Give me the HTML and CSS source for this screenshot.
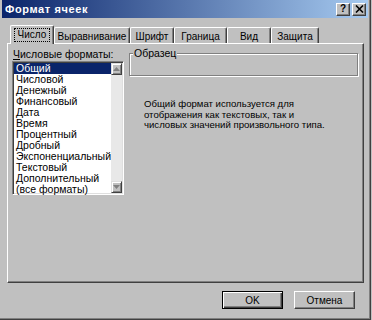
FILE: index.html
```html
<!DOCTYPE html>
<html lang="ru">
<head>
  <meta charset="UTF-8" />
  <title>Формат ячеек</title>
  <link rel="stylesheet" href="styles.css">
</head>
<body>
  <div class="window">
    <div class="titlebar">
      <div class="title">Формат ячеек</div>
      <div class="title-btns">
        <span class="tbtn">?</span>
        <span class="tbtn">
          <svg width="9" height="8" viewBox="0 0 9 8"><path d="M1 0.5 L8 7.5 M8 0.5 L1 7.5" stroke="#000" stroke-width="1.6"/></svg>
        </span>
      </div>
    </div>

    <div class="tabs">
      <div class="tab active"><span class="focus">Число</span></div>
      <div class="tab t-align">Выравнивание</div>
      <div class="tab t-font">Шрифт</div>
      <div class="tab t-border">Граница</div>
      <div class="tab t-view">Вид</div>
      <div class="tab t-prot">Защита</div>
    </div>

    <div class="panel">
      <div class="left-col">
        <div class="list-label"><u>Ч</u>исловые форматы:</div>
        <div class="listbox">
          <ul class="items">
            <li class="selected">Общий</li>
            <li>Числовой</li>
            <li>Денежный</li>
            <li>Финансовый</li>
            <li>Дата</li>
            <li>Время</li>
            <li>Процентный</li>
            <li>Дробный</li>
            <li>Экспоненциальный</li>
            <li>Текстовый</li>
            <li>Дополнительный</li>
            <li>(все форматы)</li>
          </ul>
          <div class="scrollbar">
            <div class="sbtn"><svg width="7" height="4" viewBox="0 0 7 4"><path d="M0 4 L3.5 0 L7 4 Z" fill="#808080"/></svg></div>
            <div class="track"></div>
            <div class="sbtn"><svg width="7" height="4" viewBox="0 0 7 4"><path d="M0 0 L3.5 4 L7 0 Z" fill="#808080"/></svg></div>
          </div>
        </div>
      </div>
      <div class="right-col">
        <div class="group">
          <span class="group-label">Образец</span>
        </div>
        <p class="desc">Общий формат используется для<br>отображения как текстовых, так и<br>числовых значений произвольного типа.</p>
      </div>
    </div>

    <div class="buttons">
      <button class="btn default">OK</button>
      <button class="btn">Отмена</button>
    </div>
  </div>
</body>
</html>
```

FILE: styles.css
```css
* { margin: 0; padding: 0; box-sizing: border-box; }
body {
  background-color: #c0c0c0;
  font-family: "Liberation Sans", Arial, sans-serif;
  font-size: 10px;
  color: #000;
  width: 372px;
  height: 320px;
  overflow: hidden;
}

.window {
  width: 371px;
  height: 320px;
  padding: 0 2px 0 2px;
  border-right: 1px solid #404040;
  border-bottom: 1px solid #404040;
  box-shadow: inset -1px -1px 0 #808080;
}

.titlebar {
  height: 18px;
  background: linear-gradient(to right, #0a246a, #a6caf0);
  display: flex;
  justify-content: space-between;
  align-items: center;
  padding: 0 2px 0 3px;
}
.title {
  color: #fff;
  font-weight: bold;
  font-size: 11px;
  letter-spacing: 0.6px;
}
.title-btns { display: flex; gap: 2px; }
.tbtn {
  width: 14px;
  height: 13px;
  background: #c0c0c0;
  border-top: 1px solid #fff;
  border-left: 1px solid #fff;
  border-right: 1px solid #404040;
  border-bottom: 1px solid #404040;
  box-shadow: inset -1px -1px 0 #808080;
  display: flex;
  align-items: center;
  justify-content: center;
  font-weight: bold;
  font-size: 10px;
  line-height: 1;
}

.tabs {
  display: flex;
  align-items: flex-end;
  margin-top: 6px;
  padding-left: 8px;
  height: 19px;
  position: relative;
  z-index: 1;
}
.tab {
  height: 16px;
  border-top: 1px solid #fff;
  border-left: 1px solid #fff;
  border-right: 1px solid #404040;
  box-shadow: inset -1px 0 0 #808080;
  border-radius: 2px 2px 0 0;
  display: flex;
  align-items: center;
  justify-content: center;
  padding-top: 1px;
}
.tab.active {
  width: 44px;
  height: 19px;
  margin-bottom: -1px;
  background: #c0c0c0;
  padding-bottom: 2px;
}
.focus { border: 1px dotted #000; padding: 0 3px; line-height: 12px; }
.t-align { width: 76px; }
.t-font { width: 44px; }
.t-border { width: 53px; }
.t-view { width: 44px; }
.t-prot { width: 48px; }

.panel {
  width: 357px;
  height: 240px;
  margin-left: 5px;
  border-top: 1px solid #fff;
  border-left: 1px solid #fff;
  border-right: 1px solid #404040;
  border-bottom: 1px solid #404040;
  box-shadow: inset -1px -1px 0 #808080;
  display: flex;
  padding: 4px 0 0 4px;
}

.left-col { width: 112px; }
.list-label { height: 13px; line-height: 12px; padding-left: 1px; font-size: 10.5px; }
.list-label u { text-decoration: underline; }
.listbox {
  margin-top: 0;
  height: 134px;
  display: flex;
  background: #fff;
  border-top: 1px solid #808080;
  border-left: 1px solid #808080;
  border-right: 1px solid #fff;
  border-bottom: 1px solid #fff;
  box-shadow: inset 1px 1px 0 #404040, inset -1px -1px 0 #dfdfdf;
  padding: 1px;
}
.items { list-style: none; flex: 1; font-size: 10.5px; }
.items li { height: 11px; line-height: 11px; padding-left: 2px; white-space: nowrap; }
.items li.selected { background: #0a246a; color: #fff; }

.scrollbar { width: 15px; display: flex; flex-direction: column; }
.sbtn {
  height: 12px;
  background: #c0c0c0;
  border-top: 1px solid #dfdfdf;
  border-left: 1px solid #dfdfdf;
  border-right: 1px solid #404040;
  border-bottom: 1px solid #404040;
  box-shadow: inset 1px 1px 0 #fff, inset -1px -1px 0 #808080;
  display: flex;
  align-items: center;
  justify-content: center;
}
.track { flex: 1; background: #e8e8e8; }

.right-col { flex: 1; padding-left: 5px; padding-right: 5px; }
.group {
  margin-top: 5px;
  height: 23px;
  border: 1px solid #808080;
  box-shadow: 1px 1px 0 #fff, inset 1px 1px 0 #fff;
  position: relative;
}
.group-label {
  position: absolute;
  top: -7px;
  left: 3px;
  background: #c0c0c0;
  padding: 0 1px;
  line-height: 12px;
  font-size: 10.5px;
}
.desc {
  margin-top: 23px;
  padding-left: 15px;
  line-height: 10.5px;
  font-size: 9.6px;
}

.buttons {
  display: flex;
  justify-content: flex-end;
  gap: 11px;
  padding: 8px 13px 0 0;
}
.btn {
  width: 61px;
  height: 18px;
  background: #c0c0c0;
  font-family: "Liberation Sans", Arial, sans-serif;
  font-size: 10px;
  border-top: 1px solid #fff;
  border-left: 1px solid #fff;
  border-right: 1px solid #404040;
  border-bottom: 1px solid #404040;
  box-shadow: inset -1px -1px 0 #808080;
}
.btn.default {
  border: 1px solid #000;
  box-shadow: inset 1px 1px 0 #fff, inset -1px -1px 0 #404040, inset -2px -2px 0 #808080;
}
```
